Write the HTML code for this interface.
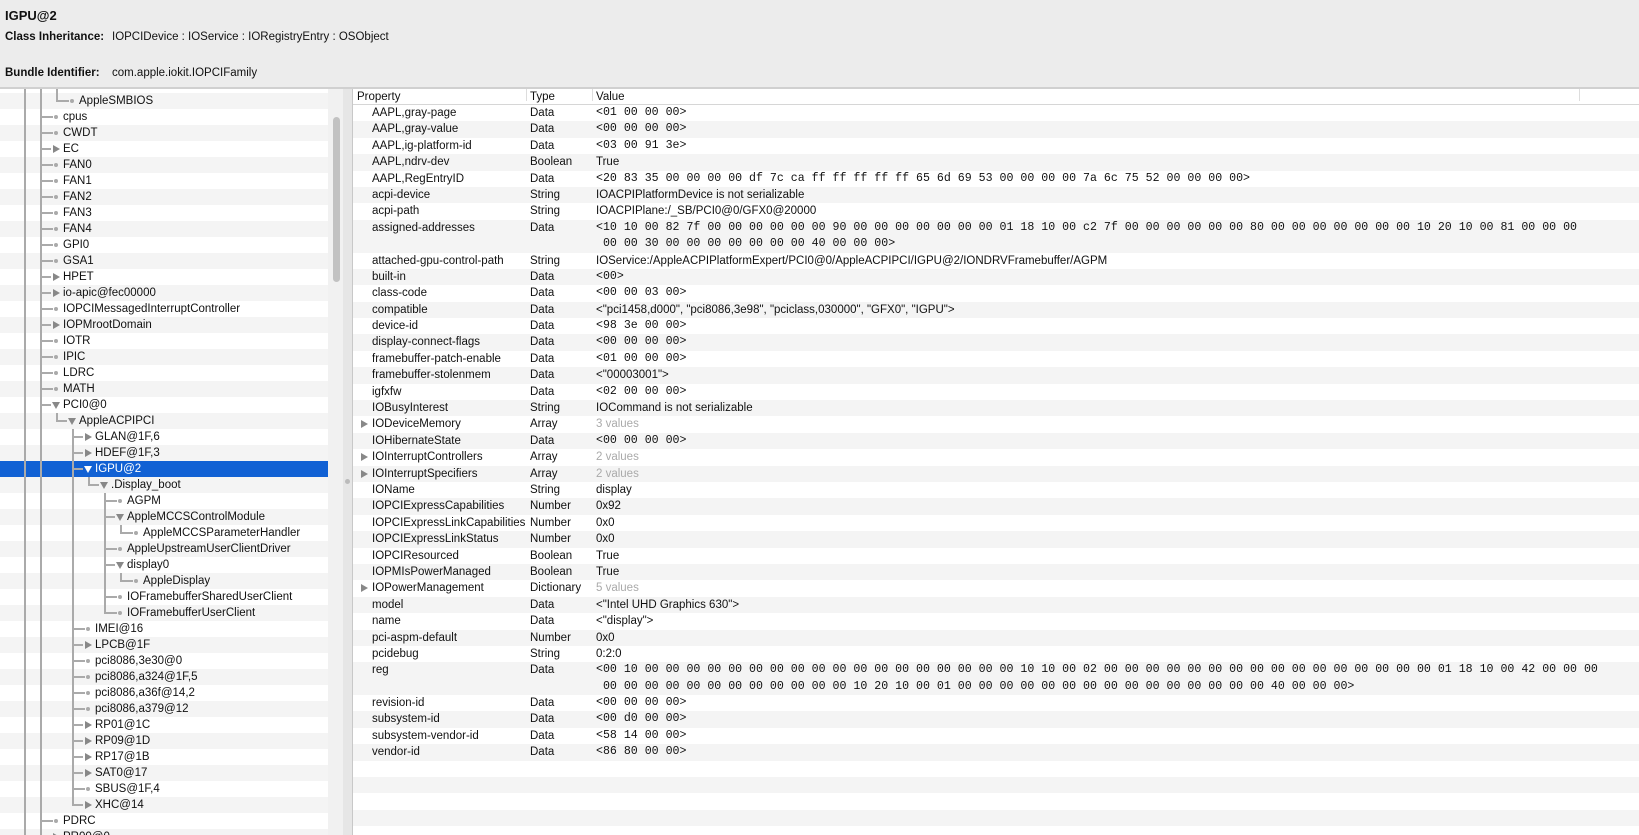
<!DOCTYPE html>
<html><head><meta charset="utf-8"><style>
*{margin:0;padding:0;box-sizing:border-box}
body{width:1639px;height:835px;overflow:hidden;background:#ececec;font-family:"Liberation Sans",sans-serif;font-size:11.5px;color:#111;position:relative}
.hd{position:absolute;left:5px;white-space:nowrap}
.b{font-weight:bold}
#left{position:absolute;left:0;top:89px;width:328px;height:746px;background:#fff;overflow:hidden}
.r{position:absolute;left:0;width:328px;height:16px;line-height:16px;white-space:nowrap}
.g{background:#f4f4f4}
.sel{background:#1161d4;color:#fff}
.t{position:absolute;top:0}
.h{position:absolute;top:7px;height:2px;background:#aaa}
.dot{position:absolute;top:6px;width:4px;height:4px;border-radius:2px;background:#aaa}
.tri{position:absolute;top:4px;width:0;height:0;border-top:4px solid transparent;border-bottom:4px solid transparent;border-left:7px solid #888}
.trd{position:absolute;top:5px;width:0;height:0;border-left:4px solid transparent;border-right:4px solid transparent;border-top:7px solid #888}
.sel .trd{border-top-color:#fff}
.v{position:absolute;width:2px;background:#aaa}
#sb{position:absolute;left:328px;top:89px;width:15px;height:746px;background:#f1f1f1}
#thumb{position:absolute;left:333px;top:117px;width:7px;height:165px;border-radius:4px;background:#c2c2c2}
#div{position:absolute;left:343px;top:89px;width:10px;height:746px;background:#e6e6e6;border-right:1px solid #c8c8c8}
#ddot{position:absolute;left:345px;top:479px;width:5px;height:5px;border-radius:3px;background:#bbb}
#right{position:absolute;left:353px;top:89px;width:1286px;height:746px;background:#fff;overflow:hidden}
#th{height:16px;border-bottom:1px solid #d6d6d6;position:relative;line-height:16px;background:#fff}
#th span{position:absolute;top:0}
.cs{position:absolute;top:2px;width:1px;height:12px;background:#ddd}
.pr{position:relative;height:16.4px;line-height:16.4px;white-space:nowrap}
.pr.d{height:32.8px}
.pr span{position:absolute;top:0}
.c1{left:19px}.c2{left:177px}.c3{left:243px}
.m{font-family:"Liberation Mono",monospace;font-size:11.6px;white-space:pre}
.gr{color:#aaa}
.rt{position:absolute;left:8px;top:4px;width:0;height:0;border-top:4px solid transparent;border-bottom:4px solid transparent;border-left:7px solid #888}
</style></head><body>
<div class="hd b" style="top:8px;font-size:13px">IGPU@2</div>
<div class="hd" style="top:31px"><span class="b">Class Inheritance:</span><span style="position:absolute;left:107px">IOPCIDevice : IOService : IORegistryEntry : OSObject</span></div>
<div class="hd" style="top:67px"><span class="b">Bundle Identifier:</span><span style="position:absolute;left:107px">com.apple.iokit.IOPCIFamily</span></div>
<div style="position:absolute;left:0;top:87px;width:1639px;height:2px;background:#d0d0d0"></div>

<div id="left">
<div class="r g" style="top:4px"><span class="h" style="left:56px;width:13px"></span><span class="dot" style="left:70px"></span><span class="t" style="left:79px">AppleSMBIOS</span></div>
<div class="r" style="top:20px"><span class="h" style="left:40px;width:13px"></span><span class="dot" style="left:54px"></span><span class="t" style="left:63px">cpus</span></div>
<div class="r g" style="top:36px"><span class="h" style="left:40px;width:13px"></span><span class="dot" style="left:54px"></span><span class="t" style="left:63px">CWDT</span></div>
<div class="r" style="top:52px"><span class="h" style="left:40px;width:11px"></span><span class="tri" style="left:53px"></span><span class="t" style="left:63px">EC</span></div>
<div class="r g" style="top:68px"><span class="h" style="left:40px;width:13px"></span><span class="dot" style="left:54px"></span><span class="t" style="left:63px">FAN0</span></div>
<div class="r" style="top:84px"><span class="h" style="left:40px;width:13px"></span><span class="dot" style="left:54px"></span><span class="t" style="left:63px">FAN1</span></div>
<div class="r g" style="top:100px"><span class="h" style="left:40px;width:13px"></span><span class="dot" style="left:54px"></span><span class="t" style="left:63px">FAN2</span></div>
<div class="r" style="top:116px"><span class="h" style="left:40px;width:13px"></span><span class="dot" style="left:54px"></span><span class="t" style="left:63px">FAN3</span></div>
<div class="r g" style="top:132px"><span class="h" style="left:40px;width:13px"></span><span class="dot" style="left:54px"></span><span class="t" style="left:63px">FAN4</span></div>
<div class="r" style="top:148px"><span class="h" style="left:40px;width:13px"></span><span class="dot" style="left:54px"></span><span class="t" style="left:63px">GPI0</span></div>
<div class="r g" style="top:164px"><span class="h" style="left:40px;width:13px"></span><span class="dot" style="left:54px"></span><span class="t" style="left:63px">GSA1</span></div>
<div class="r" style="top:180px"><span class="h" style="left:40px;width:11px"></span><span class="tri" style="left:53px"></span><span class="t" style="left:63px">HPET</span></div>
<div class="r g" style="top:196px"><span class="h" style="left:40px;width:11px"></span><span class="tri" style="left:53px"></span><span class="t" style="left:63px">io-apic@fec00000</span></div>
<div class="r" style="top:212px"><span class="h" style="left:40px;width:13px"></span><span class="dot" style="left:54px"></span><span class="t" style="left:63px">IOPCIMessagedInterruptController</span></div>
<div class="r g" style="top:228px"><span class="h" style="left:40px;width:11px"></span><span class="tri" style="left:53px"></span><span class="t" style="left:63px">IOPMrootDomain</span></div>
<div class="r" style="top:244px"><span class="h" style="left:40px;width:13px"></span><span class="dot" style="left:54px"></span><span class="t" style="left:63px">IOTR</span></div>
<div class="r g" style="top:260px"><span class="h" style="left:40px;width:13px"></span><span class="dot" style="left:54px"></span><span class="t" style="left:63px">IPIC</span></div>
<div class="r" style="top:276px"><span class="h" style="left:40px;width:13px"></span><span class="dot" style="left:54px"></span><span class="t" style="left:63px">LDRC</span></div>
<div class="r g" style="top:292px"><span class="h" style="left:40px;width:13px"></span><span class="dot" style="left:54px"></span><span class="t" style="left:63px">MATH</span></div>
<div class="r" style="top:308px"><span class="h" style="left:40px;width:11px"></span><span class="trd" style="left:52px"></span><span class="t" style="left:63px">PCI0@0</span></div>
<div class="r g" style="top:324px"><span class="h" style="left:56px;width:11px"></span><span class="trd" style="left:68px"></span><span class="t" style="left:79px">AppleACPIPCI</span></div>
<div class="r" style="top:340px"><span class="h" style="left:72px;width:11px"></span><span class="tri" style="left:85px"></span><span class="t" style="left:95px">GLAN@1F,6</span></div>
<div class="r g" style="top:356px"><span class="h" style="left:72px;width:11px"></span><span class="tri" style="left:85px"></span><span class="t" style="left:95px">HDEF@1F,3</span></div>
<div class="r sel" style="top:372px"><span class="h" style="left:72px;width:11px"></span><span class="trd" style="left:84px"></span><span class="t" style="left:95px">IGPU@2</span></div>
<div class="r g" style="top:388px"><span class="h" style="left:88px;width:11px"></span><span class="trd" style="left:100px"></span><span class="t" style="left:111px">.Display_boot</span></div>
<div class="r" style="top:404px"><span class="h" style="left:104px;width:13px"></span><span class="dot" style="left:118px"></span><span class="t" style="left:127px">AGPM</span></div>
<div class="r g" style="top:420px"><span class="h" style="left:104px;width:11px"></span><span class="trd" style="left:116px"></span><span class="t" style="left:127px">AppleMCCSControlModule</span></div>
<div class="r" style="top:436px"><span class="h" style="left:120px;width:13px"></span><span class="dot" style="left:134px"></span><span class="t" style="left:143px">AppleMCCSParameterHandler</span></div>
<div class="r g" style="top:452px"><span class="h" style="left:104px;width:13px"></span><span class="dot" style="left:118px"></span><span class="t" style="left:127px">AppleUpstreamUserClientDriver</span></div>
<div class="r" style="top:468px"><span class="h" style="left:104px;width:11px"></span><span class="trd" style="left:116px"></span><span class="t" style="left:127px">display0</span></div>
<div class="r g" style="top:484px"><span class="h" style="left:120px;width:13px"></span><span class="dot" style="left:134px"></span><span class="t" style="left:143px">AppleDisplay</span></div>
<div class="r" style="top:500px"><span class="h" style="left:104px;width:13px"></span><span class="dot" style="left:118px"></span><span class="t" style="left:127px">IOFramebufferSharedUserClient</span></div>
<div class="r g" style="top:516px"><span class="h" style="left:104px;width:13px"></span><span class="dot" style="left:118px"></span><span class="t" style="left:127px">IOFramebufferUserClient</span></div>
<div class="r" style="top:532px"><span class="h" style="left:72px;width:13px"></span><span class="dot" style="left:86px"></span><span class="t" style="left:95px">IMEI@16</span></div>
<div class="r g" style="top:548px"><span class="h" style="left:72px;width:11px"></span><span class="tri" style="left:85px"></span><span class="t" style="left:95px">LPCB@1F</span></div>
<div class="r" style="top:564px"><span class="h" style="left:72px;width:13px"></span><span class="dot" style="left:86px"></span><span class="t" style="left:95px">pci8086,3e30@0</span></div>
<div class="r g" style="top:580px"><span class="h" style="left:72px;width:13px"></span><span class="dot" style="left:86px"></span><span class="t" style="left:95px">pci8086,a324@1F,5</span></div>
<div class="r" style="top:596px"><span class="h" style="left:72px;width:13px"></span><span class="dot" style="left:86px"></span><span class="t" style="left:95px">pci8086,a36f@14,2</span></div>
<div class="r g" style="top:612px"><span class="h" style="left:72px;width:13px"></span><span class="dot" style="left:86px"></span><span class="t" style="left:95px">pci8086,a379@12</span></div>
<div class="r" style="top:628px"><span class="h" style="left:72px;width:11px"></span><span class="tri" style="left:85px"></span><span class="t" style="left:95px">RP01@1C</span></div>
<div class="r g" style="top:644px"><span class="h" style="left:72px;width:11px"></span><span class="tri" style="left:85px"></span><span class="t" style="left:95px">RP09@1D</span></div>
<div class="r" style="top:660px"><span class="h" style="left:72px;width:11px"></span><span class="tri" style="left:85px"></span><span class="t" style="left:95px">RP17@1B</span></div>
<div class="r g" style="top:676px"><span class="h" style="left:72px;width:11px"></span><span class="tri" style="left:85px"></span><span class="t" style="left:95px">SAT0@17</span></div>
<div class="r" style="top:692px"><span class="h" style="left:72px;width:13px"></span><span class="dot" style="left:86px"></span><span class="t" style="left:95px">SBUS@1F,4</span></div>
<div class="r g" style="top:708px"><span class="h" style="left:72px;width:11px"></span><span class="tri" style="left:85px"></span><span class="t" style="left:95px">XHC@14</span></div>
<div class="r" style="top:724px"><span class="h" style="left:40px;width:13px"></span><span class="dot" style="left:54px"></span><span class="t" style="left:63px">PDRC</span></div>
<div class="r g" style="top:740px"><span class="h" style="left:40px;width:11px"></span><span class="tri" style="left:53px"></span><span class="t" style="left:63px">PR00@0</span></div>
<div class="v" style="left:24px;top:0;height:746px"></div>
<div class="v" style="left:40px;top:0;height:746px"></div>
<div class="v" style="left:56px;top:0;height:13px"></div>
<div class="v" style="left:56px;top:324px;height:9px"></div>
<div class="v" style="left:72px;top:340px;height:377px"></div>
<div class="v" style="left:88px;top:388px;height:9px"></div>
<div class="v" style="left:104px;top:404px;height:121px"></div>
<div class="v" style="left:120px;top:436px;height:9px"></div>
<div class="v" style="left:120px;top:484px;height:9px"></div>
</div>
<div id="sb"></div><div id="thumb"></div>
<div id="div"></div><div id="ddot"></div>

<div id="right">
<div id="th"><span style="left:4px">Property</span><span class="cs" style="left:173px"></span><span style="left:177px">Type</span><span class="cs" style="left:239px"></span><span style="left:243px">Value</span><span class="cs" style="left:1226px"></span></div>
<div class="pr"><span class="c1">AAPL,gray-page</span><span class="c2">Data</span><span class="c3 m">&lt;01 00 00 00&gt;</span></div>
<div class="pr g"><span class="c1">AAPL,gray-value</span><span class="c2">Data</span><span class="c3 m">&lt;00 00 00 00&gt;</span></div>
<div class="pr"><span class="c1">AAPL,ig-platform-id</span><span class="c2">Data</span><span class="c3 m">&lt;03 00 91 3e&gt;</span></div>
<div class="pr g"><span class="c1">AAPL,ndrv-dev</span><span class="c2">Boolean</span><span class="c3">True</span></div>
<div class="pr"><span class="c1">AAPL,RegEntryID</span><span class="c2">Data</span><span class="c3 m">&lt;20 83 35 00 00 00 00 df 7c ca ff ff ff ff ff 65 6d 69 53 00 00 00 00 7a 6c 75 52 00 00 00 00&gt;</span></div>
<div class="pr g"><span class="c1">acpi-device</span><span class="c2">String</span><span class="c3">IOACPIPlatformDevice is not serializable</span></div>
<div class="pr"><span class="c1">acpi-path</span><span class="c2">String</span><span class="c3">IOACPIPlane:/_SB/PCI0@0/GFX0@20000</span></div>
<div class="pr g d"><span class="c1">assigned-addresses</span><span class="c2">Data</span><span class="c3 m">&lt;10 10 00 82 7f 00 00 00 00 00 00 90 00 00 00 00 00 00 00 01 18 10 00 c2 7f 00 00 00 00 00 00 80 00 00 00 00 00 00 00 10 20 10 00 81 00 00 00
 00 00 30 00 00 00 00 00 00 00 40 00 00 00&gt;</span></div>
<div class="pr"><span class="c1">attached-gpu-control-path</span><span class="c2">String</span><span class="c3">IOService:/AppleACPIPlatformExpert/PCI0@0/AppleACPIPCI/IGPU@2/IONDRVFramebuffer/AGPM</span></div>
<div class="pr g"><span class="c1">built-in</span><span class="c2">Data</span><span class="c3 m">&lt;00&gt;</span></div>
<div class="pr"><span class="c1">class-code</span><span class="c2">Data</span><span class="c3 m">&lt;00 00 03 00&gt;</span></div>
<div class="pr g"><span class="c1">compatible</span><span class="c2">Data</span><span class="c3">&lt;"pci1458,d000", "pci8086,3e98", "pciclass,030000", "GFX0", "IGPU"&gt;</span></div>
<div class="pr"><span class="c1">device-id</span><span class="c2">Data</span><span class="c3 m">&lt;98 3e 00 00&gt;</span></div>
<div class="pr g"><span class="c1">display-connect-flags</span><span class="c2">Data</span><span class="c3 m">&lt;00 00 00 00&gt;</span></div>
<div class="pr"><span class="c1">framebuffer-patch-enable</span><span class="c2">Data</span><span class="c3 m">&lt;01 00 00 00&gt;</span></div>
<div class="pr g"><span class="c1">framebuffer-stolenmem</span><span class="c2">Data</span><span class="c3">&lt;"00003001"&gt;</span></div>
<div class="pr"><span class="c1">igfxfw</span><span class="c2">Data</span><span class="c3 m">&lt;02 00 00 00&gt;</span></div>
<div class="pr g"><span class="c1">IOBusyInterest</span><span class="c2">String</span><span class="c3">IOCommand is not serializable</span></div>
<div class="pr"><i class="rt"></i><span class="c1">IODeviceMemory</span><span class="c2">Array</span><span class="c3 gr">3 values</span></div>
<div class="pr g"><span class="c1">IOHibernateState</span><span class="c2">Data</span><span class="c3 m">&lt;00 00 00 00&gt;</span></div>
<div class="pr"><i class="rt"></i><span class="c1">IOInterruptControllers</span><span class="c2">Array</span><span class="c3 gr">2 values</span></div>
<div class="pr g"><i class="rt"></i><span class="c1">IOInterruptSpecifiers</span><span class="c2">Array</span><span class="c3 gr">2 values</span></div>
<div class="pr"><span class="c1">IOName</span><span class="c2">String</span><span class="c3">display</span></div>
<div class="pr g"><span class="c1">IOPCIExpressCapabilities</span><span class="c2">Number</span><span class="c3">0x92</span></div>
<div class="pr"><span class="c1">IOPCIExpressLinkCapabilities</span><span class="c2">Number</span><span class="c3">0x0</span></div>
<div class="pr g"><span class="c1">IOPCIExpressLinkStatus</span><span class="c2">Number</span><span class="c3">0x0</span></div>
<div class="pr"><span class="c1">IOPCIResourced</span><span class="c2">Boolean</span><span class="c3">True</span></div>
<div class="pr g"><span class="c1">IOPMIsPowerManaged</span><span class="c2">Boolean</span><span class="c3">True</span></div>
<div class="pr"><i class="rt"></i><span class="c1">IOPowerManagement</span><span class="c2">Dictionary</span><span class="c3 gr">5 values</span></div>
<div class="pr g"><span class="c1">model</span><span class="c2">Data</span><span class="c3">&lt;"Intel UHD Graphics 630"&gt;</span></div>
<div class="pr"><span class="c1">name</span><span class="c2">Data</span><span class="c3">&lt;"display"&gt;</span></div>
<div class="pr g"><span class="c1">pci-aspm-default</span><span class="c2">Number</span><span class="c3">0x0</span></div>
<div class="pr"><span class="c1">pcidebug</span><span class="c2">String</span><span class="c3">0:2:0</span></div>
<div class="pr g d"><span class="c1">reg</span><span class="c2">Data</span><span class="c3 m">&lt;00 10 00 00 00 00 00 00 00 00 00 00 00 00 00 00 00 00 00 00 10 10 00 02 00 00 00 00 00 00 00 00 00 00 00 00 00 00 00 00 01 18 10 00 42 00 00 00
 00 00 00 00 00 00 00 00 00 00 00 00 10 20 10 00 01 00 00 00 00 00 00 00 00 00 00 00 00 00 00 00 40 00 00 00&gt;</span></div>
<div class="pr"><span class="c1">revision-id</span><span class="c2">Data</span><span class="c3 m">&lt;00 00 00 00&gt;</span></div>
<div class="pr g"><span class="c1">subsystem-id</span><span class="c2">Data</span><span class="c3 m">&lt;00 d0 00 00&gt;</span></div>
<div class="pr"><span class="c1">subsystem-vendor-id</span><span class="c2">Data</span><span class="c3 m">&lt;58 14 00 00&gt;</span></div>
<div class="pr g"><span class="c1">vendor-id</span><span class="c2">Data</span><span class="c3 m">&lt;86 80 00 00&gt;</span></div>
<div class="pr"></div><div class="pr g"></div><div class="pr"></div><div class="pr g"></div><div class="pr"></div>
</div>
</body></html>
